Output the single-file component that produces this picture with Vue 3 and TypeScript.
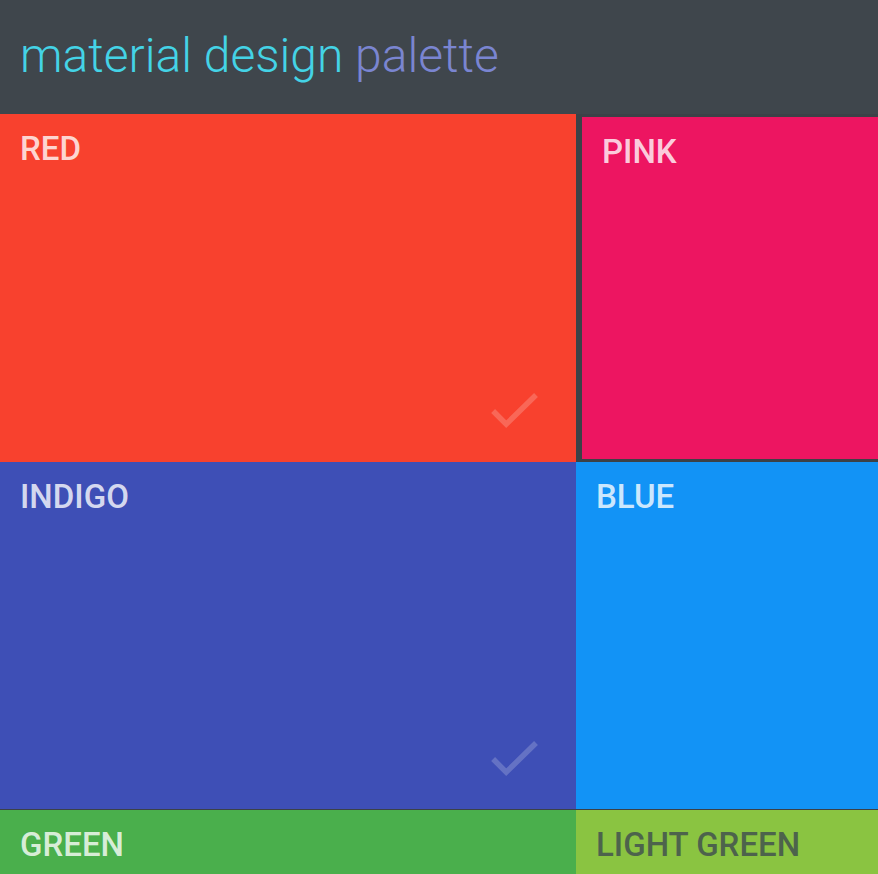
<script setup lang="ts">
import { ref } from 'vue'

interface Swatch {
  name: string
  tone: string
  checkable: boolean
}

const swatches: Swatch[] = [
  { name: 'Red', tone: 'red', checkable: true },
  { name: 'Pink', tone: 'pink', checkable: false },
  { name: 'Indigo', tone: 'indigo', checkable: true },
  { name: 'Blue', tone: 'blue', checkable: false },
  { name: 'Green', tone: 'green', checkable: false },
  { name: 'Light Green', tone: 'light-green', checkable: false },
]

const active = ref<string>('pink')
</script>

<template>
  <div class="page">
    <header class="header">
      <h1 class="title">material design <span class="accent">palette</span></h1>
    </header>
    <main class="grid">
      <button
        v-for="swatch in swatches"
        :key="swatch.tone"
        type="button"
        class="tile"
        :class="[swatch.tone, { active: active === swatch.tone }]"
        @click="active = swatch.tone"
      >
        <span class="name">{{ swatch.name }}</span>
        <svg v-if="swatch.checkable" class="check" viewBox="0 0 48 36" aria-hidden="true">
          <path d="M3.1 18 L16.2 31.2 L46 2" />
        </svg>
      </button>
    </main>
  </div>
</template>

<style>
body {
  margin: 0;
  background: #3f464c;
}
</style>

<style scoped>
.page {
  display: flex;
  flex-direction: column;
  min-height: 100vh;
  background: #3f464c;
  font-family: Roboto, "Liberation Sans", sans-serif;
}

.header {
  padding: 24px 20px 26px;
}

.title {
  margin: 0;
  font-size: 48px;
  line-height: 64px;
  font-weight: 300;
  color: #44d3e6;
}

.accent {
  color: #7a85d1;
}

.grid {
  flex: 1;
  display: grid;
  grid-template-columns: minmax(0, 576fr) minmax(0, 302fr);
  grid-template-rows: 348px 348px minmax(64px, 1fr);
  background: #3c4147;
}

.tile {
  display: flex;
  flex-direction: column;
  justify-content: space-between;
  align-items: flex-start;
  min-width: 0;
  padding: 15px 38px 33px 20px;
  border: 0;
  border-radius: 0;
  font: inherit;
  text-align: left;
  color: rgba(255, 255, 255, 0.8);
  cursor: pointer;
}

.name {
  font-size: 33px;
  line-height: 40px;
  font-weight: 500;
  text-transform: uppercase;
  white-space: nowrap;
}

.check {
  align-self: flex-end;
  width: 48px;
  height: 36px;
  fill: none;
  stroke: rgba(255, 255, 255, 0.2);
  stroke-width: 5.5;
}

.active {
  margin: 3px 0 3px 6px;
}

.red {
  background: #f8412e;
}

.pink {
  background: #ed1561;
}

.indigo {
  background: #3e4fb6;
}

.blue {
  background: #1293f6;
}

.indigo,
.blue {
  box-shadow: inset 0 -1px #3c4147;
}

.green {
  padding-bottom: 0;
  background: #4aaf4c;
}

.light-green {
  padding-bottom: 0;
  background: #8ac441;
  color: #4d634c;
}
</style>
